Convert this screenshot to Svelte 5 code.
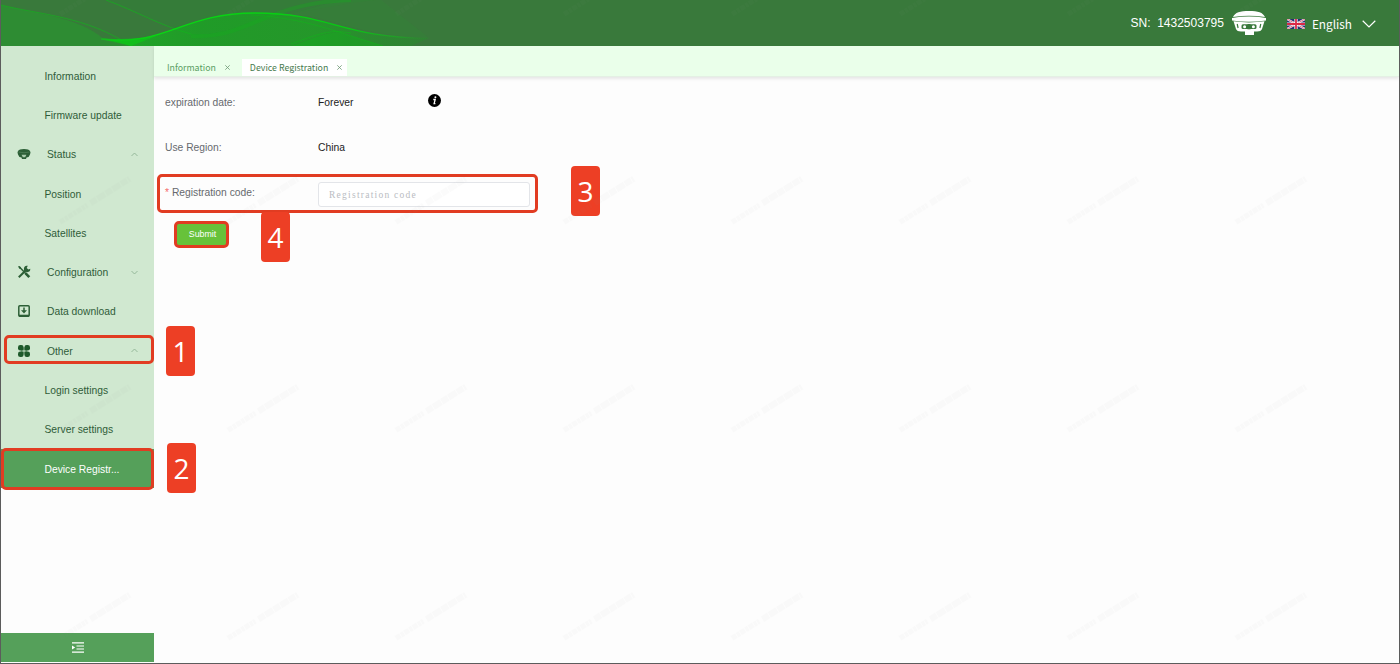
<script>
  const menu = [
    { label: 'Information' },
    { label: 'Firmware update' },
    { label: 'Status', icon: 'status', arrow: 'up' },
    { label: 'Position' },
    { label: 'Satellites' },
    { label: 'Configuration', icon: 'tools', arrow: 'down' },
    { label: 'Data download', icon: 'download' },
    { label: 'Other', icon: 'other', arrow: 'up', step: 1 },
    { label: 'Login settings' },
    { label: 'Server settings' },
    { label: 'Device Registr...', active: true, step: 2 }
  ];

  const tabs = [
    { label: 'Information', active: false },
    { label: 'Device Registration', active: true }
  ];

  let code = $state('');
</script>

<div class="app">
  <header class="header">
    <svg class="waves" width="460" height="46" viewBox="0 0 460 46">
      <defs>
        <linearGradient id="fade" x1="0" x2="1">
          <stop offset="0" stop-color="#10c21c" stop-opacity="0.65" />
          <stop offset="0.3" stop-color="#12b01c" stop-opacity="0.6" />
          <stop offset="0.65" stop-color="#14b01c" stop-opacity="0.55" />
          <stop offset="1" stop-color="#14a01c" stop-opacity="0.2" />
        </linearGradient>
        <linearGradient id="edge" gradientUnits="userSpaceOnUse" x1="95" x2="428" y1="0" y2="0">
          <stop offset="0" stop-color="#08d913" stop-opacity="0.4" />
          <stop offset="0.15" stop-color="#08d913" />
          <stop offset="0.75" stop-color="#08c913" />
          <stop offset="1" stop-color="#08c913" stop-opacity="0" />
        </linearGradient>
      </defs>
      <path d="M0 5C35 14 75 16 103 39L130 46H0Z" fill="#22a52a" opacity=".45" />
      <path d="M105 0C138 12 166 30 197 36C224 34 250 20 289 14C318 9 345 3 375 0Z" fill="#2a8e30" opacity=".2" />
      <path d="M289 14C330 16 350 34 428 38L380 0H340Z" fill="#2a9a30" opacity=".14" />
      <path d="M100 39C165 47 180 13 254 13C330 13 340 38 428 38L410 46H130Z" fill="url(#fade)" />
      <path d="M290 46C310 40 318 34 337 32L382 46Z" fill="#0db517" opacity=".3" />
      <path d="M190 36C245 40 265 2 350 0" fill="none" stroke="#12b31b" stroke-width="4" opacity=".3" />
      <path d="M0 5C40 15 85 16 130 46M105 0C135 11 160 26 190 34" fill="none" stroke="#12b31b" opacity=".65" />
      <path d="M250 15C305 18 335 32 382 46M290 44C325 31 330 30 350 33" fill="none" stroke="#12b31b" opacity=".6" />
      <path d="M100 39C165 47 180 13 254 13C330 13 340 38 428 38" fill="none" stroke="url(#edge)" stroke-width="1.3" />
      <path d="M100 38Q125 41 158 35L130 46Z" fill="#08cf13" opacity=".6" />
    </svg>
    <span class="sn">SN:&nbsp; 1432503795</span>
    <svg class="receiver" width="34" height="24" viewBox="0 0 34 24">
      <path d="M1 6C3 1.5 8 0 17 0S31 1.5 33 6Q17 3.4 1 6Z" fill="#fff" />
      <path d="M0 7Q17 4.2 34 7V9.5Q17 12 0 9.5Z" fill="#fff" />
      <path d="M1.5 10.3Q17 12.6 32.5 10.3L30 18Q29 20.5 25 20.5H22V24H13V20.5H9Q5 20.5 4 18Z" fill="#fff" />
      <path d="M5.2 13l.9 4M28.8 13l-.9 4" stroke="#39793b" stroke-width="1.2" />
      <rect x="9.5" y="13.3" width="15" height="4.8" rx="1.5" fill="#39793b" />
      <circle cx="12.6" cy="15.7" r="1.5" fill="#fff" />
      <circle cx="21.4" cy="15.7" r="1.5" fill="#fff" />
      <path d="M15.5 13H18.5V18.3H15.5Z" fill="#39793b" />
    </svg>
    <svg class="flag" width="18" height="10" viewBox="0 0 18 10">
      <rect width="18" height="10" fill="#25316f" />
      <path d="M0 0L18 10M18 0L0 10" stroke="#f5eef3" stroke-width="2" />
      <path d="M0 0L18 10M18 0L0 10" stroke="#d9425c" stroke-width=".7" />
      <path d="M9 0V10M0 5H18" stroke="#fff" stroke-width="3.2" />
      <path d="M9 0V10M0 5H18" stroke="#dc2947" stroke-width="1.8" />
    </svg>
    <span class="lang">English</span>
    <svg class="lang-arrow" width="14" height="8" viewBox="0 0 14 8">
      <path d="M.7.8L7 7L13.3.8" fill="none" stroke="#fff" stroke-width="1.2" />
    </svg>
  </header>

  <div class="body">
    <aside class="sidebar">
      <nav class="menu">
        {#each menu as item}
          <div class="item" class:with-icon={item.icon} class:active={item.active}>
            {#if item.icon}
              <svg class="icon" width="14" height="14" viewBox="0 0 14 14">
                {#if item.icon === 'status'}
                  <path d="M1 4Q2 2 7 2T13 4Q14 5 13 7.5Q12.5 10 9.5 10.5L9 12H5L4.5 10.5Q1.5 10 1 7.5Q0 5 1 4Z" fill="#2c5f36" />
                  <path d="M1.5 5Q7 6.5 12.5 5" fill="none" stroke="#5c8c65" stroke-width=".6" />
                  <path d="M4.6 7.8H9.4L8.2 10.3H5.8Z" fill="#a9cbac" />
                {:else if item.icon === 'tools'}
                  <path d="M2 1.5L11.5 11.5" stroke="#2c5f36" stroke-width="1.4" />
                  <path d="M1 1L3.8 2.1L4.2 4L2.3 3.7Z" fill="#2c5f36" />
                  <path d="M8.4 8.2L12.3 12.2" stroke="#2c5f36" stroke-width="2.6" />
                  <path d="M1.8 12.3L9.4 4.7" stroke="#2c5f36" stroke-width="2" />
                  <path d="M10.8.8A3.2 3.2 0 1 0 13.3 3.8L11.4 4.6L9.7 3Z" fill="#2c5f36" />
                {:else if item.icon === 'download'}
                  <rect x="1.8" y="1.8" width="10.4" height="10.4" rx="1" fill="none" stroke="#2c5f36" stroke-width="1.5" />
                  <path d="M2 11.7H12" stroke="#2c5f36" stroke-width="2" />
                  <path d="M7 3.4V7" stroke="#2c5f36" stroke-width="1.5" />
                  <path d="M4 6.2H10L7 9.5Z" fill="#2c5f36" />
                {:else}
                  <rect x="1" y="1" width="5.6" height="5.6" rx="2.3" fill="#1e5a2b" />
                  <rect x="7.4" y="1" width="5.6" height="5.6" rx="2.3" fill="#1e5a2b" />
                  <rect x="1" y="7.4" width="5.6" height="5.6" rx="2.3" fill="#1e5a2b" />
                  <rect x="7.4" y="7.4" width="5.6" height="5.6" rx="2.3" fill="#1e5a2b" />
                  <path d="M4 4.5H6.6V6.6H4ZM7.4 4.5H10V6.6H7.4ZM4 7.4H6.6V9.5H4ZM7.4 7.4H10V9.5H7.4Z" fill="#1e5a2b" />
                {/if}
              </svg>
            {/if}
            <span class="label">{item.label}</span>
            {#if item.arrow}
              <svg class="arrow" class:down={item.arrow === 'down'} width="7" height="5" viewBox="0 0 7 5">
                <path d="M.5 4L3.5 1L6.5 4" fill="none" stroke="#8fb394" stroke-width=".9" />
              </svg>
            {/if}
            {#if item.step}
              <div class="mark" class:mark-full={item.active}></div>
              <div class="badge menu-badge" class:lower={item.active}>{item.step}</div>
            {/if}
          </div>
        {/each}
      </nav>
      <div class="collapse">
        <svg width="12" height="11" viewBox="0 0 12 11">
          <path d="M0 .8H12M4.5 4H12M4.5 7H12M0 10.2H12" stroke="#fff" stroke-width="1.2" />
          <path d="M0 3.4L3.2 5.5L0 7.6Z" fill="#fff" />
        </svg>
      </div>
    </aside>

    <main class="main">
      <div class="tabs">
        {#each tabs as tab}
          <div class="tab" class:current={tab.active}>
            <span>{tab.label}</span>
            <svg width="5" height="5" viewBox="0 0 5 5">
              <path d="M.3.3L4.7 4.7M4.7.3L.3 4.7" stroke="#6d9873" stroke-width=".8" />
            </svg>
          </div>
        {/each}
      </div>

      <form class="form">
        <div class="row">
          <span class="name">expiration date:</span>
          <span class="value">Forever</span>
          <svg class="info" width="13" height="13" viewBox="0 0 13 13">
            <circle cx="6.5" cy="6.5" r="6.5" fill="#000" />
            <circle cx="7.4" cy="3.3" r="1" fill="#fff" />
            <path d="M5.3 5.5H7.2L6.1 9.7H7.4" fill="none" stroke="#fff" stroke-width="1.3" />
          </svg>
        </div>
        <div class="row">
          <span class="name">Use Region:</span>
          <span class="value">China</span>
        </div>
        <div class="row">
          <label class="name" for="code"><i>*</i> Registration code:</label>
          <input id="code" placeholder="Registration code" bind:value={code} />
          <div class="mark code-mark"></div>
          <div class="badge code-badge">3</div>
        </div>
        <div class="actions">
          <button type="button">Submit</button>
          <div class="badge submit-badge">4</div>
        </div>
      </form>
    </main>
  </div>

  <!-- faint diagonal watermark -->
  <svg class="watermark" width="1400" height="664">
    <defs>
      <pattern id="wm" x="178" y="97" width="168" height="208" patternUnits="userSpaceOnUse">
        <g transform="rotate(-32 84 104)" stroke="#999" fill="none">
          <path d="M44 104H76" stroke-width="5" stroke-dasharray="5 1 3 1" />
          <path d="M80 104H126" stroke-width="6" stroke-dasharray="7 1 9 1" />
        </g>
      </pattern>
    </defs>
    <rect width="1400" height="664" fill="url(#wm)" />
  </svg>
</div>

<style>
  :global(body) {
    background: #fdfdfd;
  }

  .app {
    position: relative;
    display: flex;
    flex-direction: column;
    width: 1400px;
    height: 664px;
    box-sizing: border-box;
    border: 1px solid #5c5c5c;
    border-top: 0;
    background: #fdfdfd;
    font-family: 'Liberation Sans', Arial, sans-serif;
    font-size: 10.3px;
    overflow: hidden;
  }

  .header {
    position: relative;
    display: flex;
    align-items: center;
    justify-content: flex-end;
    height: 46px;
    flex: none;
    padding-right: 23px;
    box-sizing: border-box;
    background: #39793b;
    color: #fff;
  }

  .waves {
    position: absolute;
    left: 0;
    top: 0;
  }

  .sn {
    font-size: 12px;
    margin-right: 8px;
    white-space: pre;
  }

  .flag {
    margin: 2px 7px 0 21px;
  }

  .lang {
    margin: 1px 10px 0 0;
    font-family: 'Noto Sans CJK SC', 'Noto Sans', sans-serif;
    font-size: 11.8px;
  }

  .lang-arrow {
    margin-top: 1px;
  }

  .body {
    display: flex;
    flex: 1;
    min-height: 0;
  }

  .sidebar {
    display: flex;
    flex-direction: column;
    justify-content: space-between;
    width: 153px;
    flex: none;
  }

  .menu {
    padding-top: 10px;
    background: #d0e8d0;
    color: #2f5c38;
  }

  .item {
    position: relative;
    display: flex;
    align-items: center;
    height: 39.3px;
    padding-left: 43.5px;
    box-sizing: border-box;
  }

  .item.with-icon {
    padding-left: 16px;
    padding-right: 16px;
  }

  .item.active {
    background: #55a05a;
    color: #fff;
  }

  .icon {
    margin-right: 16px;
  }

  .label {
    padding-top: 1px;
    white-space: nowrap;
  }

  .arrow {
    margin-left: auto;
  }

  .arrow.down {
    transform: rotate(180deg);
  }

  .collapse {
    display: flex;
    align-items: center;
    justify-content: center;
    height: 29px;
    margin-bottom: 1px;
    background: #55a05a;
  }

  .main {
    flex: 1;
    min-width: 0;
  }

  .tabs {
    display: flex;
    align-items: flex-end;
    gap: 7px;
    height: 31px;
    padding-left: 5px;
    box-sizing: border-box;
    background: #eaffea;
    border-bottom: 1px solid #e4f0e4;
    box-shadow: 0 2px 3px rgba(0, 0, 0, 0.09);
  }

  .tab {
    display: flex;
    align-items: center;
    gap: 9px;
    height: 17px;
    padding: 0 5px 0 8px;
    font-family: 'Noto Sans CJK SC', 'Noto Sans', sans-serif;
    font-size: 8.8px;
    color: #5a9e62;
  }

  .tab.current {
    background: #fff;
    color: #477a4e;
  }

  .form {
    padding: 2px 0 0 11px;
  }

  .row {
    position: relative;
    display: flex;
    align-items: center;
    height: 45px;
  }

  .name {
    width: 153px;
    padding-top: 1px;
    color: #66696e;
  }

  .name i {
    color: #f56c6c;
    font-style: normal;
  }

  .value {
    width: 110px;
    padding-top: 1px;
    color: #222;
  }

  .info {
    margin-bottom: 3px;
  }

  input {
    width: 212px;
    height: 25px;
    margin-top: 5px;
    padding: 2px 10px 0;
    box-sizing: border-box;
    border: 1px solid #e3e5e9;
    border-radius: 3px;
    background: #fff;
    font-family: 'Liberation Serif', serif;
    font-size: 9.5px;
    outline: none;
  }

  input::placeholder {
    letter-spacing: 1.25px;
    color: #b9bcc2;
    opacity: 1;
  }

  .actions {
    position: relative;
    padding: 7px 0 0 9px;
  }

  button {
    display: block;
    width: 55px;
    height: 27px;
    padding: 0 0 1px 2px;
    border: 3px solid #e13c22;
    border-radius: 5px;
    background: #67c23a;
    color: #fff;
    font-family: inherit;
    font-size: 8.8px;
  }

  /* callouts */
  .mark {
    position: absolute;
    left: 3px;
    right: 0;
    top: 4px;
    height: 29px;
    box-sizing: border-box;
    border: 3px solid #e13c22;
    border-radius: 5px;
  }

  .mark.mark-full {
    left: 0;
    top: -1px;
    height: 42px;
  }

  .mark.code-mark {
    left: -8px;
    right: auto;
    top: 5px;
    width: 381px;
    height: 39px;
  }

  .badge {
    position: absolute;
    display: flex;
    align-items: center;
    justify-content: center;
    width: 29px;
    height: 50px;
    border-radius: 4px;
    background: #ed3f25;
    color: #fff;
    font-family: 'Open Sans', 'Noto Sans', sans-serif;
    font-size: 28px;
  }

  .menu-badge {
    left: 165px;
    top: -5px;
  }

  .menu-badge.lower {
    left: 166px;
    top: -6px;
  }

  .code-badge {
    left: 406px;
    top: -3px;
  }

  .submit-badge {
    left: 96px;
    top: -2px;
  }

  .watermark {
    position: absolute;
    left: -1px;
    top: 0;
    opacity: 0.035;
    pointer-events: none;
  }
</style>
